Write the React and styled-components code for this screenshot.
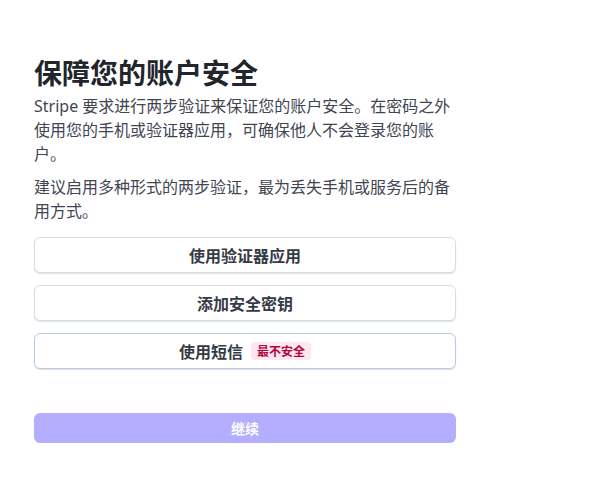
import React from "react";
import styled, { createGlobalStyle } from "styled-components";

const Global = createGlobalStyle`
  html, body { margin: 0; padding: 0; background: #ffffff; }
  body { font-family: "Noto Sans", "Noto Sans CJK SC", sans-serif; }
`;

const Page = styled.div`
  padding: 55px 0 40px 34px;
`;

const Card = styled.div`
  width: 422px;
  display: flex;
  flex-direction: column;
`;

const Title = styled.h1`
  margin: 0 0 3px;
  font-size: 28px;
  line-height: 36px;
  font-weight: 700;
  color: #21252c;
`;

const Text = styled.p`
  margin: 0 0 ${(p) => p.$mb || 0}px;
  font-size: 16px;
  line-height: 24px;
  color: #414552;
`;

const Options = styled.div`
  margin-top: 14px;
  display: flex;
  flex-direction: column;
  gap: 12px;
`;

const Option = styled.button`
  height: 36px;
  width: 100%;
  display: flex;
  align-items: center;
  justify-content: center;
  gap: 8px;
  background: #ffffff;
  border: 1px solid ${(p) => (p.$active ? "#b7cbe0" : "#d8dbe1")};
  border-radius: 6px;
  box-shadow: 0 1px 1px rgba(0, 0, 0, 0.12);
  font-family: inherit;
  font-size: 16px;
  font-weight: 700;
  color: #353a44;
  cursor: pointer;
  padding: 0;
`;

const Badge = styled.span`
  display: inline-flex;
  align-items: center;
  height: 18px;
  padding: 0 6px;
  border-radius: 4px;
  background: #ffe7f2;
  color: #b3063d;
  font-size: 12px;
  font-weight: 700;
`;

const Continue = styled.button`
  margin-top: 44px;
  height: 30px;
  width: 100%;
  border: none;
  border-radius: 6px;
  background: #b3aefe;
  color: #ffffff;
  font-family: inherit;
  font-size: 14px;
  font-weight: 700;
  padding: 0;
`;

export default function App() {
  return (
    <Page>
      <Global />
      <Card>
        <Title>保障您的账户安全</Title>
        <Text $mb={9}>
          Stripe 要求进行两步验证来保证您的账户安全。在密码之外使用您的手机或验证器应用，可确保他人不会登录您的账户。
        </Text>
        <Text>建议启用多种形式的两步验证，最为丢失手机或服务后的备用方式。</Text>
        <Options>
          <Option>使用验证器应用</Option>
          <Option>添加安全密钥</Option>
          <Option $active>
            使用短信<Badge>最不安全</Badge>
          </Option>
        </Options>
        <Continue disabled>继续</Continue>
      </Card>
    </Page>
  );
}
